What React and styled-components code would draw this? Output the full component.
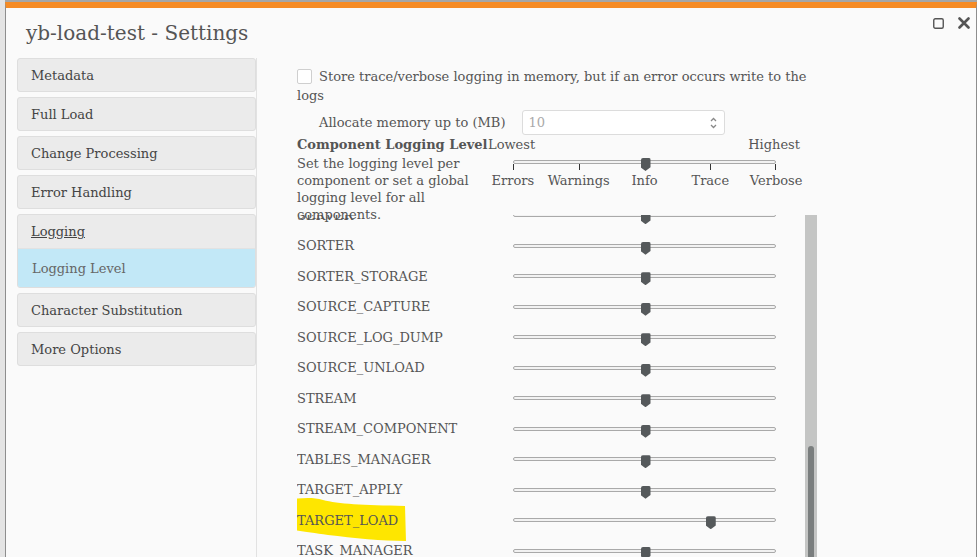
import React from "react";
import styled, { createGlobalStyle } from "styled-components";

const Global = createGlobalStyle`
  html, body { margin: 0; padding: 0; height: 100%; overflow: hidden; }
  body { background: #e4e4e4; font-family: "DejaVu Serif", serif; color: #555; }
  #root { height: 100%; }
`;

const Dialog = styled.div`
  margin: 2px 0 0 5px;
  width: 970px;
  height: 600px;
  background: #fafafa;
  border-top: 6px solid #f68b24;
  border-left: 1px solid #8e8e8e;
  border-right: 1px solid #8e8e8e;
  box-shadow: 0 -2px 0 #a6a6a6;
  display: flex;
  flex-direction: column;
`;

const Header = styled.div`
  display: flex;
  justify-content: space-between;
  align-items: flex-start;
  padding: 9px 6px 0 20px;
  height: 41px;
`;

const Title = styled.h1`
  margin: 4px 0 0;
  font-size: 20px;
  line-height: 24px;
  font-weight: normal;
  color: #555;
`;

const Tools = styled.div`
  display: flex;
  gap: 14px;
  align-items: center;
`;

const ToolIcon = styled.svg`
  display: block;
`;

const Main = styled.div`
  display: flex;
  flex: 1;
  padding-left: 11px;
  min-height: 0;
`;

const Nav = styled.nav`
  width: 239px;
  flex: none;
  display: flex;
  flex-direction: column;
  gap: 5px;
`;

const NavItem = styled.div`
  height: 34px;
  box-sizing: border-box;
  display: flex;
  align-items: center;
  padding-left: 13px;
  background: #ebebeb;
  border: 1px solid #dedede;
  border-radius: 3px;
  font-size: 13px;
  color: #444;
`;

const NavGroup = styled.div`
  display: flex;
  flex-direction: column;
  border: 1px solid #dedede;
  border-radius: 3px;
  overflow: hidden;
  background: #ebebeb;
`;

const NavGroupHead = styled.div`
  height: 34px;
  box-sizing: border-box;
  display: flex;
  align-items: center;
  padding-left: 13px;
  font-size: 13px;
  color: #444;
  text-decoration: underline;
  border-bottom: 1px solid #e2e2e2;
`;

const NavSub = styled.div`
  height: 38px;
  display: flex;
  align-items: center;
  padding-left: 14px;
  font-size: 13px;
  color: #666;
  background: ${(p) => (p.$active ? "#c2e8f7" : "transparent")};
`;

const Content = styled.section`
  flex: 1;
  border-left: 1px solid #e2e2e2;
  padding: 9px 0 0 40px;
  display: flex;
  flex-direction: column;
  min-height: 0;
`;

const Para = styled.p`
  margin: 0;
  width: 520px;
  font-size: 13px;
  line-height: 19px;
  color: #555;
`;

const Check = styled.span`
  display: inline-block;
  width: 15px;
  height: 15px;
  box-sizing: border-box;
  border: 1px solid #cfcfcf;
  border-radius: 2px;
  background: #fff;
  vertical-align: -3px;
  margin-right: 7px;
`;

const MemRow = styled.div`
  display: flex;
  align-items: center;
  gap: 16px;
  margin: 5px 0 0 22px;
  font-size: 13px;
`;

const NumInput = styled.div`
  width: 203px;
  height: 25px;
  box-sizing: border-box;
  border: 1px solid #dcdcdc;
  border-radius: 3px;
  background: #fff;
  display: flex;
  align-items: center;
  justify-content: space-between;
  padding: 0 6px 0 6px;
  color: #aaa;
  font-size: 13px;
`;

const LevelHead = styled.div`
  display: flex;
  height: 80px;
  position: relative;
  z-index: 1;
`;

const LevelText = styled.div`
  width: 183px;
  flex: none;
`;

const LevelTitle = styled.div`
  font-weight: bold;
  font-size: 13px;
  line-height: 19px;
  white-space: nowrap;
`;

const LevelDesc = styled.div`
  width: 175px;
  font-size: 13px;
  line-height: 17px;
  margin-top: 1px;
`;

const Scale = styled.div`
  width: 329px;
  display: flex;
  flex-direction: column;
`;

const ScaleEnds = styled.div`
  display: flex;
  justify-content: space-between;
  padding: 0 9px 0 8px;
  font-size: 13px;
  line-height: 19px;
`;

const ScaleTrackWrap = styled.div`
  margin: 6px 33px 0;
`;

const Ticks = styled.div`
  display: flex;
  justify-content: space-between;
  height: 6px;
`;

const Tick = styled.span`
  width: 1px;
  background: #333;
`;

const ScaleLabels = styled.div`
  display: grid;
  grid-template-columns: repeat(5, 1fr);
  text-align: center;
  font-size: 13px;
  line-height: 17px;
  margin-top: 2px;
`;

const Track = styled.div`
  position: relative;
  height: 4px;
  box-sizing: border-box;
  border: 1px solid #a9a9a9;
  border-radius: 2px;
  background: #f2f2f2;
`;

const Thumb = styled.span`
  position: absolute;
  top: -3px;
  width: 10px;
  height: 13px;
  transform: translateX(-40%);
  background: #55595b;
  border-radius: 2px 2px 0 0;
  clip-path: polygon(0 0, 100% 0, 100% 72%, 50% 100%, 0 72%);
`;

const ListArea = styled.div`
  display: flex;
  flex: 1;
  min-height: 0;
`;

const ListWindow = styled.div`
  width: 508px;
  overflow: hidden;
`;

const ListInner = styled.div`
  margin-top: -15px;
`;

const Row = styled.div`
  height: 30.5px;
  display: grid;
  grid-template-columns: 216px 263px;
  align-items: center;
`;

const RowLabel = styled.div`
  position: relative;
  font-size: 13px;
  color: #555;
`;

const LabelText = styled.span`
  position: relative;
`;

const Marker = styled.svg`
  position: absolute;
  left: -4px;
  top: -15px;
  width: 114px;
  height: 44px;
`;

const ScrollTrack = styled.div`
  width: 12px;
  background: #c4c5c4;
  display: flex;
  justify-content: center;
`;

const ScrollThumb = styled.div`
  width: 6px;
  height: 300px;
  background: #7a7e7e;
  border-radius: 3px 3px 0 0;
`;

const navItems = ["Metadata", "Full Load", "Change Processing", "Error Handling"];
const navAfter = ["Character Substitution", "More Options"];
const levels = ["Errors", "Warnings", "Info", "Trace", "Verbose"];
const rows = [
  ["SERVER", 2],
  ["SORTER", 2],
  ["SORTER_STORAGE", 2],
  ["SOURCE_CAPTURE", 2],
  ["SOURCE_LOG_DUMP", 2],
  ["SOURCE_UNLOAD", 2],
  ["STREAM", 2],
  ["STREAM_COMPONENT", 2],
  ["TABLES_MANAGER", 2],
  ["TARGET_APPLY", 2],
  ["TARGET_LOAD", 3, true],
  ["TASK_MANAGER", 2],
  ["TRANSFORMATION", 2],
  ["UTILITIES", 2],
];

function Slider({ value }) {
  return (
    <Track>
      <Thumb style={{ left: `${(value / 4) * 100}%` }} />
    </Track>
  );
}

export default function App() {
  return (
    <>
      <Global />
      <Dialog>
        <Header>
          <Title>yb-load-test - Settings</Title>
          <Tools>
            <ToolIcon width="11" height="11" viewBox="0 0 11 11">
              <rect x="0.75" y="0.75" width="9.5" height="9.5" rx="1.5" fill="none" stroke="#555" strokeWidth="1.4" />
            </ToolIcon>
            <ToolIcon width="12" height="12" viewBox="0 0 12 12">
              <path d="M1.5 1.5 L10.5 10.5 M10.5 1.5 L1.5 10.5" stroke="#555" strokeWidth="2.6" strokeLinecap="round" />
            </ToolIcon>
          </Tools>
        </Header>
        <Main>
          <Nav>
            {navItems.map((n) => (
              <NavItem key={n}>{n}</NavItem>
            ))}
            <NavGroup>
              <NavGroupHead>Logging</NavGroupHead>
              <NavSub $active>Logging Level</NavSub>
            </NavGroup>
            {navAfter.map((n) => (
              <NavItem key={n}>{n}</NavItem>
            ))}
          </Nav>
          <Content>
            <Para>
              <Check />
              Store trace/verbose logging in memory, but if an error occurs write to the logs
            </Para>
            <MemRow>
              <span>Allocate memory up to (MB)</span>
              <NumInput>
                <span>10</span>
                <svg width="9" height="14" viewBox="0 0 9 14">
                  <path d="M2 5 L4.5 2.5 L7 5 M2 9 L4.5 11.5 L7 9" fill="none" stroke="#888" strokeWidth="1.3" />
                </svg>
              </NumInput>
            </MemRow>
            <LevelHead>
              <LevelText>
                <LevelTitle>Component Logging Level</LevelTitle>
                <LevelDesc>Set the logging level per component or set a global logging level for all components.</LevelDesc>
              </LevelText>
              <Scale>
                <ScaleEnds>
                  <span>Lowest</span>
                  <span>Highest</span>
                </ScaleEnds>
                <ScaleTrackWrap>
                  <Slider value={2} />
                  <Ticks>
                    {levels.map((l) => (
                      <Tick key={l} />
                    ))}
                  </Ticks>
                </ScaleTrackWrap>
                <ScaleLabels>
                  {levels.map((l) => (
                    <span key={l}>{l}</span>
                  ))}
                </ScaleLabels>
              </Scale>
            </LevelHead>
            <ListArea>
              <ListWindow>
                <ListInner>
                  {rows.map(([name, v, mark]) => (
                    <Row key={name}>
                      <RowLabel>
                        {mark && (
                          <Marker viewBox="0 0 114 44">
                            <path d="M0 1 C10 0 20 -1 30 2 C45 6 70 7 112 8 L113 43 C90 43 60 40 35 37 C20 35 8 33 0 32 Z" fill="#fee600" />
                          </Marker>
                        )}
                        <LabelText>{name}</LabelText>
                      </RowLabel>
                      <Slider value={v} />
                    </Row>
                  ))}
                </ListInner>
              </ListWindow>
              <ScrollTrack>
                <ScrollThumb style={{ marginTop: 231 }} />
              </ScrollTrack>
            </ListArea>
          </Content>
        </Main>
      </Dialog>
    </>
  );
}
